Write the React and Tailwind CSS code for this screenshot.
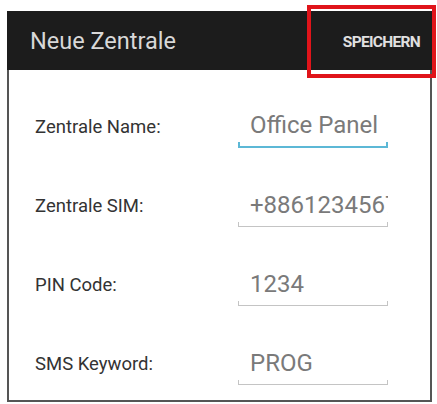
export default function App() {
  const rows = [
    { label: 'Zentrale Name:', value: 'Office Panel', active: true },
    { label: 'Zentrale SIM:', value: '+886123456789' },
    { label: 'PIN Code:', value: '1234' },
    { label: 'SMS Keyword:', value: 'PROG' },
  ];

  return (
    <div className="relative h-[404px] w-[437px] bg-white pt-[11px] pl-[7px]" style={{ fontFamily: 'Roboto, "Liberation Sans", sans-serif' }}>
      <div className="w-[425px] h-[391px] border-x-2 border-b-2 border-[#555] flex flex-col">
        <div className="h-[62px] bg-[#1c1c1c] flex items-center justify-between -mx-[2px]">
          <span className="pl-[23px] pt-[3px] text-[23.5px] text-[#d8d8d8]">Neue Zentrale</span>
          <span className="pr-[12px] pt-[4px] text-[15.5px] font-bold text-[#e0e0e0] tracking-[-0.7px]">SPEICHERN</span>
        </div>
        <div className="flex flex-col pt-[14px]">
          {rows.map((row) => (
            <div key={row.label} className="h-[79px] flex items-center">
              <span className="w-[229px] pl-[26px] pt-[8px] text-[18.5px] text-[#333]">{row.label}</span>
              <div className="w-[150px] pt-[12px] flex flex-col">
                <div className="overflow-hidden whitespace-nowrap pl-[12px] text-[24px] text-[#7a7a7a] leading-[28px]">
                  {row.value}
                </div>
                <div
                  className={
                    row.active
                      ? 'mt-[3px] h-[6px] border-x-2 border-b-2 border-[#5cb8d6]'
                      : 'mt-[3px] h-[5px] border-x border-b border-[#c4c4c4]'
                  }
                />
              </div>
            </div>
          ))}
        </div>
      </div>
      <div className="absolute left-[307px] top-[5px] w-[129px] h-[73px] border-[4px] border-[#e0141a]" />
    </div>
  );
}
